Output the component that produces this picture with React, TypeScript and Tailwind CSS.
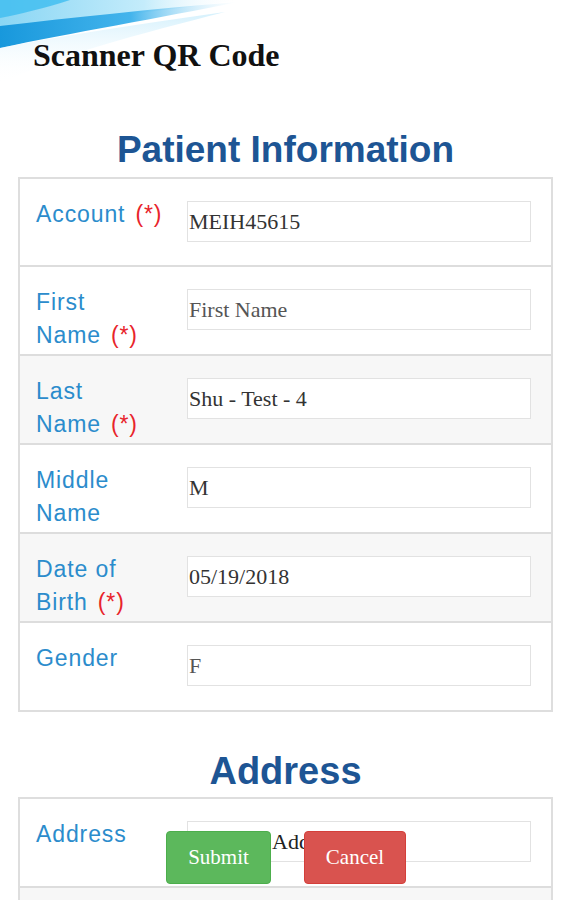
import React from "react";

type Field = {
  label: string[];
  required?: boolean;
  value: string;
  muted?: boolean;
};

const patientFields: Field[] = [
  { label: ["Account"], required: true, value: "MEIH45615" },
  { label: ["First", "Name"], required: true, value: "First Name", muted: true },
  { label: ["Last", "Name"], required: true, value: "Shu - Test - 4" },
  { label: ["Middle", "Name"], value: "M" },
  { label: ["Date of", "Birth"], required: true, value: "05/19/2018" },
  { label: ["Gender"], value: "F", muted: true },
];

function Swoosh() {
  return (
    <svg className="absolute left-0 top-0" width="260" height="110" viewBox="0 0 260 110" aria-hidden>
      <defs>
        <linearGradient id="sky" x1="0" y1="0" x2="1" y2="0">
          <stop offset="0" stopColor="#8ad6f4" />
          <stop offset="0.6" stopColor="#c4ecfb" />
          <stop offset="1" stopColor="#ffffff" stopOpacity="0" />
        </linearGradient>
        <linearGradient id="band" x1="0" y1="0" x2="1" y2="0">
          <stop offset="0" stopColor="#1898dc" />
          <stop offset="0.55" stopColor="#44b4ec" />
          <stop offset="1" stopColor="#c9ecfb" stopOpacity="0" />
        </linearGradient>
        <linearGradient id="fade" x1="0" y1="0" x2="0" y2="1">
          <stop offset="0" stopColor="#cdeefc" />
          <stop offset="1" stopColor="#ffffff" stopOpacity="0" />
        </linearGradient>
      </defs>
      <path d="M0 0 H240 C170 10 90 18 0 30 Z" fill="url(#sky)" />
      <path d="M0 0 H70 C45 8 20 14 0 18 Z" fill="#3dbdf0" opacity="0.8" />
      <path d="M0 26 C70 18 150 9 238 2 C160 18 70 33 0 48 Z" fill="url(#band)" />
      <path d="M0 48 C60 36 140 24 225 12 C140 34 60 54 0 84 Z" fill="url(#fade)" opacity="0.85" />
    </svg>
  );
}

function Label({ lines, required }: { lines: string[]; required?: boolean }) {
  return (
    <div className="w-[167px] shrink-0 pl-[16px] pt-[19px] font-['Liberation_Sans',Arial,sans-serif] text-[23px] leading-[33px] tracking-[0.9px] text-[#2b8ccc]">
      {lines.map((line, i) => (
        <div key={i}>
          {line}
          {required && i === lines.length - 1 && (
            <span className="ml-[10px] text-[#e8242b]">(*)</span>
          )}
        </div>
      ))}
    </div>
  );
}

function Row({ field, shaded }: { field: Field; shaded: boolean }) {
  return (
    <div
      className={`group flex h-[89px] items-start border-t-2 border-[#dddddd] first:h-[86px] first:border-t-0 ${
        shaded ? "bg-[#f7f7f7]" : "bg-white"
      }`}
    >
      <Label lines={field.label} required={field.required} />
      <div className="mt-[22px] flex h-[41px] w-[344px] items-center border border-[#e2e2e2] bg-white px-[1px] font-['Liberation_Serif','Times_New_Roman',serif] text-[22px] text-[#333333]">
        <span className={field.muted ? "text-[#555555]" : ""}>{field.value}</span>
      </div>
    </div>
  );
}

export default function App() {
  return (
    <div className="relative h-[900px] w-[571px] overflow-hidden bg-white">
      <Swoosh />
      <div className="relative px-[33px] pt-[38px] font-['Liberation_Serif','Times_New_Roman',serif] text-[32px] font-bold leading-[34px] text-[#111111]">
        Scanner QR Code
      </div>

      <h1 className="mt-[57px] mb-[6px] text-center font-['Liberation_Sans',Arial,sans-serif] text-[37px] font-bold leading-[42px] text-[#1d5594]">
        Patient Information
      </h1>

      <div className="mx-[18px] border-2 border-[#dedede]">
        {patientFields.map((f, i) => (
          <Row key={f.label.join(" ")} field={f} shaded={i === 2 || i === 4} />
        ))}
      </div>

      <h2 className="mt-[38px] mb-[5px] text-center font-['Liberation_Sans',Arial,sans-serif] text-[38px] font-bold leading-[42px] text-[#1d5594]">
        Address
      </h2>

      <div className="relative mx-[18px] border-2 border-[#dedede]">
        <div className="flex h-[87px] items-start bg-white">
          <Label lines={["Address"]} />
          <div className="mt-[22px] flex h-[41px] w-[344px] items-center border border-[#e2e2e2] bg-white pl-[84px] font-['Liberation_Serif','Times_New_Roman',serif] text-[22px] text-[#222222]">
            Address
          </div>
        </div>
        <div className="h-[40px] border-t-2 border-[#dddddd] bg-[#f7f7f7]" />

        <div className="absolute left-[146px] top-[32px] flex gap-[33px] font-['Liberation_Serif','Times_New_Roman',serif] text-[21px] text-white">
          <button className="flex h-[53px] w-[105px] items-center justify-center rounded-[4px] border border-[#4cae4c] bg-[#5cb85c]">
            Submit
          </button>
          <button className="flex h-[53px] w-[102px] items-center justify-center rounded-[4px] border border-[#d43f3a] bg-[#d9534f]">
            Cancel
          </button>
        </div>
      </div>
    </div>
  );
}
